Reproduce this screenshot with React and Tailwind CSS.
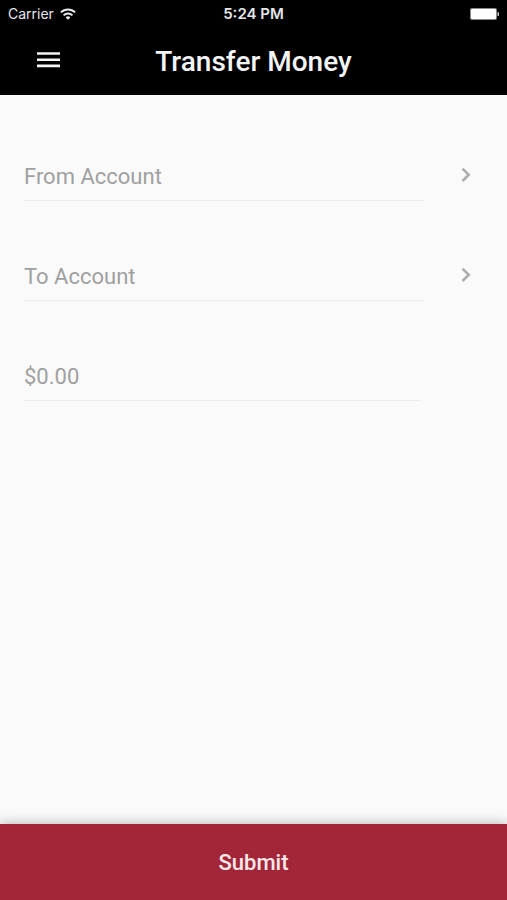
import { useState } from 'react';

function StatusBar() {
  return (
    <div className="grid h-7 grid-cols-3 items-center pl-2 pr-2 font-['Inter',sans-serif] text-sm text-gray-200">
      <div className="flex items-center gap-[6px]">
        <span>Carrier</span>
        <svg width="16" height="12" viewBox="0 0 16 12" fill="none" stroke="currentColor" strokeWidth="2" aria-hidden="true">
          <path d="M.9 4.4a10.2 10.2 0 0 1 14.2 0" />
          <path d="M3.6 7.4a6.2 6.2 0 0 1 8.8 0" />
          <path d="M8 11.8 5.6 9.4a3.4 3.4 0 0 1 4.8 0Z" fill="currentColor" stroke="none" />
        </svg>
      </div>
      <span className="text-center text-[15px] font-semibold">5:24 PM</span>
      <svg className="justify-self-end" width="30" height="12" viewBox="0 0 30 12" aria-hidden="true">
        <rect x="1" y="0" width="27" height="12" rx="2" fill="#8a8a8a" />
        <rect x="2" y="1" width="25" height="10" rx="1" fill="#fff" />
        <path d="M28.5 4a2 2 0 0 1 0 4Z" fill="#ccc" />
      </svg>
    </div>
  );
}

function AccountRow({ label, value, onChange }) {
  return (
    <div className="flex h-[100px] items-end pl-6">
      <input
        type="text"
        aria-label={label}
        placeholder={label}
        value={value}
        onChange={(e) => onChange(e.target.value)}
        className="h-12 min-w-0 flex-1 border-b border-[#ececec] bg-transparent text-[22px] text-gray-800 outline-none placeholder:text-[#a0a0a0]"
      />
      <button type="button" aria-label={`Choose ${label}`} className="flex h-[52px] w-[83px] items-center justify-center text-[#adadad]">
        <svg width="10" height="16" viewBox="0 0 10 16" fill="none" stroke="currentColor" strokeWidth="2.6" aria-hidden="true">
          <path d="m1.5 1.6 6.2 6.2-6.2 6.2" />
        </svg>
      </button>
    </div>
  );
}

function App() {
  const [from, setFrom] = useState('');
  const [to, setTo] = useState('');
  const [amount, setAmount] = useState('');

  const handleSubmit = (e) => {
    e.preventDefault();
  };

  return (
    <div className="flex min-h-screen flex-col bg-[#fafafa] font-['Roboto',sans-serif]">
      <header className="bg-black text-white">
        <StatusBar />
        <div className="grid h-[67px] grid-cols-[96px_1fr_96px] items-center">
          <button type="button" aria-label="Menu" className="flex h-16 w-24 items-center justify-center self-start">
            <svg width="24" height="16" viewBox="0 0 24 16" fill="#f4f4f4" aria-hidden="true">
              <path d="M1 .2h23v2.6H1zM1 6.4h23V9H1zM1 12.6h23v2.6H1z" />
            </svg>
          </button>
          <h1 className="text-center text-[28px] leading-8 font-medium text-gray-100">Transfer Money</h1>
        </div>
      </header>

      <form onSubmit={handleSubmit} className="flex flex-1 flex-col">
        <div className="flex-1 pt-[6px]">
          <AccountRow label="From Account" value={from} onChange={setFrom} />
          <AccountRow label="To Account" value={to} onChange={setTo} />
          <div className="flex h-[100px] items-end pl-6 pr-[86px]">
            <input
              type="text"
              inputMode="decimal"
              aria-label="Amount"
              placeholder="$0.00"
              value={amount}
              onChange={(e) => setAmount(e.target.value)}
              className="h-12 min-w-0 flex-1 border-b border-[#ececec] bg-transparent text-[22px] text-gray-800 outline-none placeholder:text-[#a0a0a0]"
            />
          </div>
        </div>
        <button type="submit" className="h-19 w-full bg-[#a32638] text-[22px] font-medium text-[#f8e8ea] shadow-[0_0_12px_rgba(0,0,0,0.3)]">
          Submit
        </button>
      </form>
    </div>
  );
}

export default App;
